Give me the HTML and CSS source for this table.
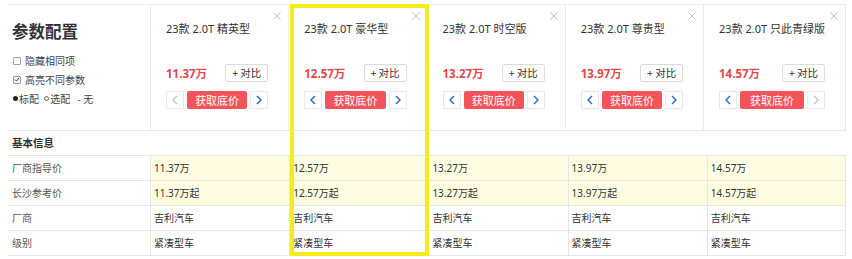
FILE: index.html
```html
<!DOCTYPE html>
<html lang="zh-CN">
<head>
<meta charset="utf-8">
<title>参数配置</title>
<link rel="stylesheet" href="styles.css">
</head>
<body>
<div class="cmp">
  <div class="head">
    <div class="side">
      <div class="side-title">参数配置</div>
      <div class="opts">
        <div class="opt"><span class="box"></span>隐藏相同项</div>
        <div class="opt"><span class="box checked"><svg viewBox="0 0 8 8" width="8" height="8"><path d="M1.5 4.2 L3.3 6 L6.6 2" fill="none" stroke="#333" stroke-width="1.3"/></svg></span>高亮不同参数</div>
        <div class="opt legend"><span class="dot"></span>标配 <span class="ring"></span>选配 <span class="dash">- 无</span></div>
      </div>
    </div>
    <div class="car">
      <span class="close"><svg viewBox="0 0 8 8" width="8" height="8"><path d="M0.5 0.5 L7.5 7.5 M7.5 0.5 L0.5 7.5" stroke="#c4c4c4" stroke-width="1"/></svg></span>
      <div class="car-name">23款 2.0T 精英型</div>
      <div class="price-row"><span class="price">11.37万</span><span class="add">+ 对比</span></div>
      <div class="nav-row">
        <span class="nav off"><svg viewBox="0 0 6 10" width="6" height="10"><path d="M5 1 L1 5 L5 9" fill="none" stroke="currentColor" stroke-width="1.5"/></svg></span>
        <span class="ask">获取底价</span>
        <span class="nav"><svg viewBox="0 0 6 10" width="6" height="10"><path d="M1 1 L5 5 L1 9" fill="none" stroke="currentColor" stroke-width="1.5"/></svg></span>
      </div>
    </div>
    <div class="car">
      <span class="close"><svg viewBox="0 0 8 8" width="8" height="8"><path d="M0.5 0.5 L7.5 7.5 M7.5 0.5 L0.5 7.5" stroke="#c4c4c4" stroke-width="1"/></svg></span>
      <div class="car-name">23款 2.0T 豪华型</div>
      <div class="price-row"><span class="price">12.57万</span><span class="add">+ 对比</span></div>
      <div class="nav-row">
        <span class="nav"><svg viewBox="0 0 6 10" width="6" height="10"><path d="M5 1 L1 5 L5 9" fill="none" stroke="currentColor" stroke-width="1.5"/></svg></span>
        <span class="ask">获取底价</span>
        <span class="nav"><svg viewBox="0 0 6 10" width="6" height="10"><path d="M1 1 L5 5 L1 9" fill="none" stroke="currentColor" stroke-width="1.5"/></svg></span>
      </div>
    </div>
    <div class="car">
      <span class="close"><svg viewBox="0 0 8 8" width="8" height="8"><path d="M0.5 0.5 L7.5 7.5 M7.5 0.5 L0.5 7.5" stroke="#c4c4c4" stroke-width="1"/></svg></span>
      <div class="car-name">23款 2.0T 时空版</div>
      <div class="price-row"><span class="price">13.27万</span><span class="add">+ 对比</span></div>
      <div class="nav-row">
        <span class="nav"><svg viewBox="0 0 6 10" width="6" height="10"><path d="M5 1 L1 5 L5 9" fill="none" stroke="currentColor" stroke-width="1.5"/></svg></span>
        <span class="ask">获取底价</span>
        <span class="nav"><svg viewBox="0 0 6 10" width="6" height="10"><path d="M1 1 L5 5 L1 9" fill="none" stroke="currentColor" stroke-width="1.5"/></svg></span>
      </div>
    </div>
    <div class="car">
      <span class="close"><svg viewBox="0 0 8 8" width="8" height="8"><path d="M0.5 0.5 L7.5 7.5 M7.5 0.5 L0.5 7.5" stroke="#c4c4c4" stroke-width="1"/></svg></span>
      <div class="car-name">23款 2.0T 尊贵型</div>
      <div class="price-row"><span class="price">13.97万</span><span class="add">+ 对比</span></div>
      <div class="nav-row">
        <span class="nav"><svg viewBox="0 0 6 10" width="6" height="10"><path d="M5 1 L1 5 L5 9" fill="none" stroke="currentColor" stroke-width="1.5"/></svg></span>
        <span class="ask">获取底价</span>
        <span class="nav"><svg viewBox="0 0 6 10" width="6" height="10"><path d="M1 1 L5 5 L1 9" fill="none" stroke="currentColor" stroke-width="1.5"/></svg></span>
      </div>
    </div>
    <div class="car">
      <span class="close"><svg viewBox="0 0 8 8" width="8" height="8"><path d="M0.5 0.5 L7.5 7.5 M7.5 0.5 L0.5 7.5" stroke="#c4c4c4" stroke-width="1"/></svg></span>
      <div class="car-name">23款 2.0T 只此青绿版</div>
      <div class="price-row"><span class="price">14.57万</span><span class="add">+ 对比</span></div>
      <div class="nav-row">
        <span class="nav"><svg viewBox="0 0 6 10" width="6" height="10"><path d="M5 1 L1 5 L5 9" fill="none" stroke="currentColor" stroke-width="1.5"/></svg></span>
        <span class="ask">获取底价</span>
        <span class="nav off"><svg viewBox="0 0 6 10" width="6" height="10"><path d="M1 1 L5 5 L1 9" fill="none" stroke="currentColor" stroke-width="1.5"/></svg></span>
      </div>
    </div>
  </div>

  <div class="cat">基本信息</div>

  <div class="row hl">
    <div class="lab">厂商指导价</div>
    <div class="val">11.37万</div><div class="val">12.57万</div><div class="val">13.27万</div><div class="val">13.97万</div><div class="val">14.57万</div>
  </div>
  <div class="row hl">
    <div class="lab">长沙参考价</div>
    <div class="val">11.37万起</div><div class="val">12.57万起</div><div class="val">13.27万起</div><div class="val">13.97万起</div><div class="val">14.57万起</div>
  </div>
  <div class="row">
    <div class="lab">厂商</div>
    <div class="val">吉利汽车</div><div class="val">吉利汽车</div><div class="val">吉利汽车</div><div class="val">吉利汽车</div><div class="val">吉利汽车</div>
  </div>
  <div class="row">
    <div class="lab">级别</div>
    <div class="val">紧凑型车</div><div class="val">紧凑型车</div><div class="val">紧凑型车</div><div class="val">紧凑型车</div><div class="val">紧凑型车</div>
  </div>

  <div class="mark"></div>
</div>
</body>
</html>
```

FILE: styles.css
```css
* { box-sizing: border-box; }

html, body {
  margin: 0;
  padding: 0;
  background: #fff;
}

body {
  padding: 4px 6px 0 8px;
  font-family: "Noto Sans", "Noto Sans CJK SC", sans-serif;
  color: #333;
  overflow: hidden;
}

.cmp {
  position: relative;
  width: 838px;
}

.head,
.row {
  display: grid;
  grid-template-columns: 142px repeat(5, 1fr);
}

.head {
  height: 127px;
  border-top: 1px solid #ececec;
  border-bottom: 1px solid #e6e6e6;
}

.side {
  padding: 15px 0 0 4px;
}

.side-title {
  font-size: 16.5px;
  line-height: 22px;
  font-weight: 700;
  color: #333;
  font-family: "Noto Sans CJK SC", sans-serif;
}

.opts {
  margin-top: 9px;
}

.opt {
  display: flex;
  align-items: center;
  font-size: 10px;
  line-height: 19px;
  height: 19px;
  color: #444;
  font-family: "Noto Sans CJK SC", sans-serif;
  white-space: pre;
}

.box {
  width: 8px;
  height: 8px;
  border: 1px solid #a8a8a8;
  border-radius: 1px;
  margin: 0 4px 0 1px;
  display: flex;
  align-items: center;
  justify-content: center;
  background: #fff;
}

.box.checked {
  border-color: #9a9a9a;
  background: #f2f2f2;
}

.box svg { display: block; width: 7px; height: 7px; }

.legend { padding-left: 1px; }

.dot,
.ring {
  display: inline-block;
  width: 5px;
  height: 5px;
  border-radius: 50%;
  margin-right: 1px;
}

.dot { background: #222; }

.ring {
  border: 1px solid #666;
  margin-left: 3px;
}

.dash { margin-left: 5px; }

.car {
  position: relative;
  border-left: 1px solid #ececec;
  padding: 16px 20px 0 15px;
  display: flex;
  flex-direction: column;
}

.car:last-child { border-right: 1px solid #ececec; }

.close {
  position: absolute;
  top: 7px;
  right: 7px;
  line-height: 0;
}

.car-name {
  font-size: 11px;
  line-height: 16px;
  color: #333;
  white-space: nowrap;
}

.price-row {
  margin-top: 27px;
  height: 18px;
  display: flex;
  align-items: center;
  justify-content: space-between;
}

.price {
  font-size: 11.5px;
  font-weight: 700;
  color: #e4474c;
}

.add {
  width: 43px;
  height: 18px;
  border: 1px solid #dcdcdc;
  border-radius: 2px;
  font-size: 10.5px;
  line-height: 16px;
  text-align: center;
  color: #333;
  font-family: "Noto Sans CJK SC", sans-serif;
}

.nav-row {
  margin-top: 9px;
  height: 18px;
  display: flex;
  gap: 3px;
}

.nav {
  width: 18px;
  height: 18px;
  border: 1px solid #e8e8e8;
  border-radius: 1px;
  display: flex;
  align-items: center;
  justify-content: center;
  color: #2e6bbf;
  background: #fff;
}

.nav.off { color: #c8c8c8; }

.ask {
  flex: 1;
  height: 18px;
  background: #f5535a;
  border-radius: 2px;
  color: #fff;
  font-size: 11px;
  line-height: 18px;
  text-align: center;
  font-family: "Noto Sans CJK SC", sans-serif;
}

.cat {
  height: 25px;
  border-bottom: 1px solid #e6e6e6;
  padding-left: 4px;
  font-size: 10.5px;
  line-height: 24px;
  font-weight: 700;
  color: #333;
  font-family: "Noto Sans CJK SC", sans-serif;
}

.row {
  height: 25px;
  border-bottom: 1px solid #e6e6e6;
  font-size: 10px;
  line-height: 24px;
}

.lab {
  padding-left: 4px;
  color: #555;
  font-family: "Noto Sans CJK SC", sans-serif;
}

.val {
  border-left: 1px solid #e6e6e6;
  padding-left: 3px;
  color: #333;
  white-space: nowrap;
}

.val:last-child { border-right: 1px solid #e6e6e6; }

.row.hl .val { background: #fefde2; }

.mark {
  position: absolute;
  left: 282px;
  top: 0;
  width: 139px;
  height: 252px;
  border: 4px solid #f6eb1b;
  pointer-events: none;
}
```
